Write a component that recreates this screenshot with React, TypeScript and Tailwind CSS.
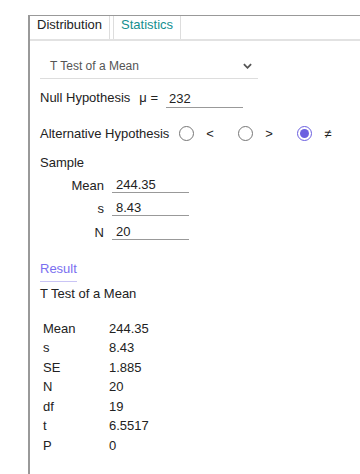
import React from "react";

const results = [
  ["Mean", "244.35"],
  ["s", "8.43"],
  ["SE", "1.885"],
  ["N", "20"],
  ["df", "19"],
  ["t", "6.5517"],
  ["P", "0"],
];

function Radio({ checked }: { checked?: boolean }) {
  return (
    <span
      className={
        "inline-flex w-[15px] h-[15px] rounded-full items-center justify-center border " +
        (checked ? "border-[#6b5fe0]" : "border-[#767676]")
      }
    >
      {checked && <span className="w-[9px] h-[9px] rounded-full bg-[#6b5fe0]" />}
    </span>
  );
}

export default function App() {
  return (
    <div
      className="h-[474px] w-[360px] overflow-hidden bg-white pt-[15px] pl-[28px] text-[13px] text-[#222]"
      style={{ fontFamily: '"Liberation Sans", Arial, sans-serif' }}
    >
      <div className="h-full w-[400px] border-l-2 border-t border-[#999]">
        {/* tabs */}
        <div className="flex h-[25px] border-b-2 border-[#e2e2e2] leading-[16px]">
          <div className="flex items-start pt-[1px] px-[7px] border-r border-[#ddd]">Distribution</div>
          <div className="ml-[3px] flex items-start pt-[1px] px-[7px] border-l border-r border-[#ddd] text-[#148f8f]">
            Statistics
          </div>
        </div>

        <div className="pl-[10px]">
          {/* select */}
          <div className="mt-[12px] flex h-[26px] w-[218px] items-center justify-between border-b border-[#ddd] pl-[10px] pr-[6px] text-[12px] text-[#555]">
            <span>T Test of a Mean</span>
            <svg viewBox="0 0 10 6" className="w-[9px] h-[6px]" fill="none" stroke="#555" strokeWidth={2}>
              <path d="M1 1l4 4 4-4" />
            </svg>
          </div>

          {/* null hypothesis */}
          <div className="mt-[9px] flex items-end">
            <span>Null Hypothesis</span>
            <span className="ml-[9px]">μ =</span>
            <span className="ml-[8px] w-[77px] border-b border-[#999] pl-[3px] leading-[17px]">232</span>
          </div>

          {/* alternative */}
          <div className="mt-[16px] flex items-center">
            <span>Alternative Hypothesis</span>
            <span className="ml-[10px] flex items-center">
              <Radio />
              <span className="ml-[12px] w-[24px]">&lt;</span>
            </span>
            <span className="ml-[8px] flex items-center">
              <Radio />
              <span className="ml-[12px] w-[24px]">&gt;</span>
            </span>
            <span className="ml-[8px] flex items-center">
              <Radio checked />
              <span className="ml-[12px]">≠</span>
            </span>
          </div>

          {/* sample */}
          <div className="mt-[10px]">Sample</div>
          <div className="mt-[5px] flex flex-col gap-[8.5px]">
            {[
              ["Mean", "244.35"],
              ["s", "8.43"],
              ["N", "20"],
            ].map(([k, v]) => (
              <div key={k} className="flex items-end leading-[14px]">
                <span className="w-[64px] text-right">{k}</span>
                <span className="ml-[8px] w-[77px] border-b border-[#999] pl-[4px]">{v}</span>
              </div>
            ))}
          </div>

          {/* result */}
          <div className="mt-[19px] inline-block border-b border-[#c9c4f5] pb-[3px] text-[#7a6ff0]">Result</div>
          <div className="mt-[2px]">T Test of a Mean</div>
          <div className="mt-[15px] pl-[3px]">
            {results.map(([k, v]) => (
              <div key={k} className="flex h-[19.5px] items-center">
                <span className="w-[66px]">{k}</span>
                <span>{v}</span>
              </div>
            ))}
          </div>
        </div>
      </div>
    </div>
  );
}
